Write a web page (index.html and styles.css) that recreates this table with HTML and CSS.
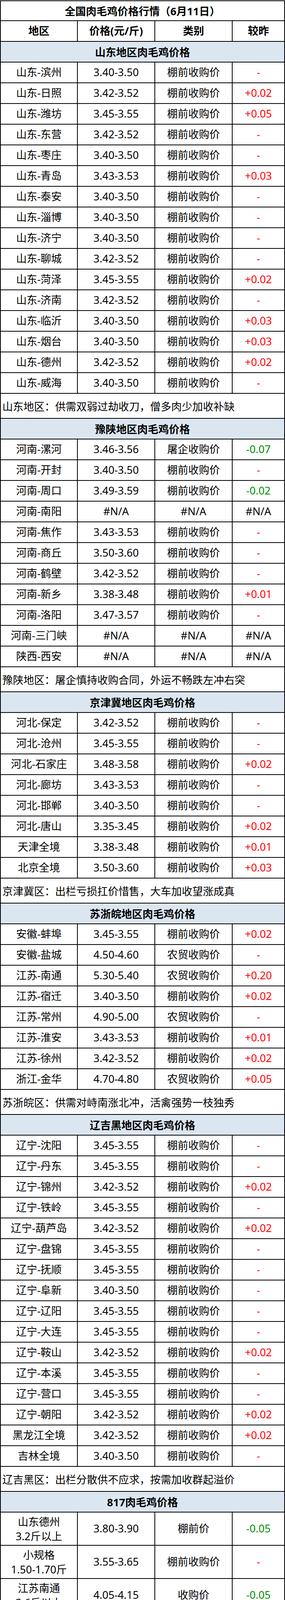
FILE: index.html
```html
<!DOCTYPE html>
<html lang="zh-CN">
<head>
<meta charset="utf-8">
<title>全国肉毛鸡价格行情</title>
<link rel="stylesheet" href="styles.css">
</head>
<body>
<div class="sheet">
  <div class="band title">全国肉毛鸡价格行情（6月11日）</div>
  <div class="r head"><div class="c">地区</div><div class="c">价格(元/斤)</div><div class="c">类别</div><div class="c">较昨</div></div>

  <div class="band sec">山东地区肉毛鸡价格</div>
  <div class="r"><div class="c">山东-滨州</div><div class="c">3.40-3.50</div><div class="c">棚前收购价</div><div class="c up">-</div></div>
  <div class="r"><div class="c">山东-日照</div><div class="c">3.42-3.52</div><div class="c">棚前收购价</div><div class="c up">+0.02</div></div>
  <div class="r"><div class="c">山东-潍坊</div><div class="c">3.45-3.55</div><div class="c">棚前收购价</div><div class="c up">+0.05</div></div>
  <div class="r"><div class="c">山东-东营</div><div class="c">3.42-3.52</div><div class="c">棚前收购价</div><div class="c up">-</div></div>
  <div class="r"><div class="c">山东-枣庄</div><div class="c">3.40-3.50</div><div class="c">棚前收购价</div><div class="c up">-</div></div>
  <div class="r"><div class="c">山东-青岛</div><div class="c">3.43-3.53</div><div class="c">棚前收购价</div><div class="c up">+0.03</div></div>
  <div class="r"><div class="c">山东-泰安</div><div class="c">3.40-3.50</div><div class="c">棚前收购价</div><div class="c up">-</div></div>
  <div class="r"><div class="c">山东-淄博</div><div class="c">3.40-3.50</div><div class="c">棚前收购价</div><div class="c up">-</div></div>
  <div class="r"><div class="c">山东-济宁</div><div class="c">3.40-3.50</div><div class="c">棚前收购价</div><div class="c up">-</div></div>
  <div class="r"><div class="c">山东-聊城</div><div class="c">3.42-3.52</div><div class="c">棚前收购价</div><div class="c up">-</div></div>
  <div class="r"><div class="c">山东-菏泽</div><div class="c">3.45-3.55</div><div class="c">棚前收购价</div><div class="c up">+0.02</div></div>
  <div class="r"><div class="c">山东-济南</div><div class="c">3.42-3.52</div><div class="c">棚前收购价</div><div class="c up">-</div></div>
  <div class="r"><div class="c">山东-临沂</div><div class="c">3.40-3.50</div><div class="c">棚前收购价</div><div class="c up">+0.03</div></div>
  <div class="r"><div class="c">山东-烟台</div><div class="c">3.40-3.50</div><div class="c">棚前收购价</div><div class="c up">+0.03</div></div>
  <div class="r"><div class="c">山东-德州</div><div class="c">3.42-3.52</div><div class="c">棚前收购价</div><div class="c up">+0.02</div></div>
  <div class="r"><div class="c">山东-威海</div><div class="c">3.40-3.50</div><div class="c">棚前收购价</div><div class="c up">-</div></div>
  <div class="band note">山东地区：供需双弱过劫收刀，僧多肉少加收补缺</div>

  <div class="band sec">豫陕地区肉毛鸡价格</div>
  <div class="r"><div class="c">河南-漯河</div><div class="c">3.46-3.56</div><div class="c">屠企收购价</div><div class="c dn">-0.07</div></div>
  <div class="r"><div class="c">河南-开封</div><div class="c">3.40-3.50</div><div class="c">棚前收购价</div><div class="c up">-</div></div>
  <div class="r"><div class="c">河南-周口</div><div class="c">3.49-3.59</div><div class="c">棚前收购价</div><div class="c dn">-0.02</div></div>
  <div class="r"><div class="c">河南-南阳</div><div class="c">#N/A</div><div class="c">#N/A</div><div class="c">#N/A</div></div>
  <div class="r"><div class="c">河南-焦作</div><div class="c">3.43-3.53</div><div class="c">棚前收购价</div><div class="c up">-</div></div>
  <div class="r"><div class="c">河南-商丘</div><div class="c">3.50-3.60</div><div class="c">棚前收购价</div><div class="c up">-</div></div>
  <div class="r"><div class="c">河南-鹤壁</div><div class="c">3.42-3.52</div><div class="c">棚前收购价</div><div class="c up">-</div></div>
  <div class="r"><div class="c">河南-新乡</div><div class="c">3.38-3.48</div><div class="c">棚前收购价</div><div class="c up">+0.01</div></div>
  <div class="r"><div class="c">河南-洛阳</div><div class="c">3.47-3.57</div><div class="c">棚前收购价</div><div class="c up">-</div></div>
  <div class="r"><div class="c">河南-三门峡</div><div class="c">#N/A</div><div class="c">#N/A</div><div class="c">#N/A</div></div>
  <div class="r"><div class="c">陕西-西安</div><div class="c">#N/A</div><div class="c">#N/A</div><div class="c">#N/A</div></div>
  <div class="band note">豫陕地区：屠企慎持收购合同，外运不畅跌左冲右突</div>

  <div class="band sec">京津冀地区肉毛鸡价格</div>
  <div class="r"><div class="c">河北-保定</div><div class="c">3.42-3.52</div><div class="c">棚前收购价</div><div class="c up">-</div></div>
  <div class="r"><div class="c">河北-沧州</div><div class="c">3.45-3.55</div><div class="c">棚前收购价</div><div class="c up">-</div></div>
  <div class="r"><div class="c">河北-石家庄</div><div class="c">3.48-3.58</div><div class="c">棚前收购价</div><div class="c up">+0.02</div></div>
  <div class="r"><div class="c">河北-廊坊</div><div class="c">3.43-3.53</div><div class="c">棚前收购价</div><div class="c up">-</div></div>
  <div class="r"><div class="c">河北-邯郸</div><div class="c">3.40-3.50</div><div class="c">棚前收购价</div><div class="c up">-</div></div>
  <div class="r"><div class="c">河北-唐山</div><div class="c">3.35-3.45</div><div class="c">棚前收购价</div><div class="c up">+0.02</div></div>
  <div class="r"><div class="c">天津全境</div><div class="c">3.38-3.48</div><div class="c">棚前收购价</div><div class="c up">+0.01</div></div>
  <div class="r"><div class="c">北京全境</div><div class="c">3.50-3.60</div><div class="c">棚前收购价</div><div class="c up">+0.03</div></div>
  <div class="band note">京津冀区：出栏亏损扛价惜售，大车加收望涨成真</div>

  <div class="band sec">苏浙皖地区肉毛鸡价格</div>
  <div class="r"><div class="c">安徽-蚌埠</div><div class="c">3.45-3.55</div><div class="c">棚前收购价</div><div class="c up">+0.02</div></div>
  <div class="r"><div class="c">安徽-盐城</div><div class="c">4.50-4.60</div><div class="c">农贸收购价</div><div class="c up">-</div></div>
  <div class="r"><div class="c">江苏-南通</div><div class="c">5.30-5.40</div><div class="c">农贸收购价</div><div class="c up">+0.20</div></div>
  <div class="r"><div class="c">江苏-宿迁</div><div class="c">3.40-3.50</div><div class="c">棚前收购价</div><div class="c up">+0.02</div></div>
  <div class="r"><div class="c">江苏-常州</div><div class="c">4.90-5.00</div><div class="c">农贸收购价</div><div class="c up">-</div></div>
  <div class="r"><div class="c">江苏-淮安</div><div class="c">3.43-3.53</div><div class="c">棚前收购价</div><div class="c up">+0.01</div></div>
  <div class="r"><div class="c">江苏-徐州</div><div class="c">3.42-3.52</div><div class="c">棚前收购价</div><div class="c up">+0.02</div></div>
  <div class="r"><div class="c">浙江-金华</div><div class="c">4.70-4.80</div><div class="c">农贸收购价</div><div class="c up">+0.05</div></div>
  <div class="band note">苏浙皖区：供需对峙南涨北冲，活禽强势一枝独秀</div>

  <div class="band sec">辽吉黑地区肉毛鸡价格</div>
  <div class="r"><div class="c">辽宁-沈阳</div><div class="c">3.45-3.55</div><div class="c">棚前收购价</div><div class="c up">-</div></div>
  <div class="r"><div class="c">辽宁-丹东</div><div class="c">3.45-3.55</div><div class="c">棚前收购价</div><div class="c up">-</div></div>
  <div class="r"><div class="c">辽宁-锦州</div><div class="c">3.42-3.52</div><div class="c">棚前收购价</div><div class="c up">+0.02</div></div>
  <div class="r"><div class="c">辽宁-铁岭</div><div class="c">3.45-3.55</div><div class="c">棚前收购价</div><div class="c up">-</div></div>
  <div class="r"><div class="c">辽宁-葫芦岛</div><div class="c">3.42-3.52</div><div class="c">棚前收购价</div><div class="c up">+0.02</div></div>
  <div class="r"><div class="c">辽宁-盘锦</div><div class="c">3.45-3.55</div><div class="c">棚前收购价</div><div class="c up">-</div></div>
  <div class="r"><div class="c">辽宁-抚顺</div><div class="c">3.45-3.55</div><div class="c">棚前收购价</div><div class="c up">-</div></div>
  <div class="r"><div class="c">辽宁-阜新</div><div class="c">3.40-3.50</div><div class="c">棚前收购价</div><div class="c up">-</div></div>
  <div class="r"><div class="c">辽宁-辽阳</div><div class="c">3.45-3.55</div><div class="c">棚前收购价</div><div class="c up">-</div></div>
  <div class="r"><div class="c">辽宁-大连</div><div class="c">3.45-3.55</div><div class="c">棚前收购价</div><div class="c up">-</div></div>
  <div class="r"><div class="c">辽宁-鞍山</div><div class="c">3.42-3.52</div><div class="c">棚前收购价</div><div class="c up">+0.02</div></div>
  <div class="r"><div class="c">辽宁-本溪</div><div class="c">3.45-3.55</div><div class="c">棚前收购价</div><div class="c up">-</div></div>
  <div class="r"><div class="c">辽宁-营口</div><div class="c">3.45-3.55</div><div class="c">棚前收购价</div><div class="c up">-</div></div>
  <div class="r"><div class="c">辽宁-朝阳</div><div class="c">3.42-3.52</div><div class="c">棚前收购价</div><div class="c up">+0.02</div></div>
  <div class="r"><div class="c">黑龙江全境</div><div class="c">3.42-3.52</div><div class="c">棚前收购价</div><div class="c up">+0.02</div></div>
  <div class="r"><div class="c">吉林全境</div><div class="c">3.40-3.50</div><div class="c">棚前收购价</div><div class="c up">-</div></div>
  <div class="band note">辽吉黑区：出栏分散供不应求，按需加收群起溢价</div>

  <div class="band sec">817肉毛鸡价格</div>
  <div class="r tall"><div class="c two">山东德州<br>3.2斤以上</div><div class="c">3.80-3.90</div><div class="c">棚前价</div><div class="c dn">-0.05</div></div>
  <div class="r tall"><div class="c two">小规格<br>1.50-1.70斤</div><div class="c">3.55-3.65</div><div class="c">棚前收购价</div><div class="c up">-</div></div>
  <div class="r tall"><div class="c two">江苏南通<br>3.6斤以上</div><div class="c">4.05-4.15</div><div class="c">收购价</div><div class="c dn">-0.05</div></div>
  <div class="r tall"><div class="c two">山东聊城<br>2.8-3.2斤</div><div class="c">3.75-3.85</div><div class="c">棚前收购价</div><div class="c dn">-0.05</div></div>
  <div class="r tall"><div class="c two">浙江金华<br>3.6斤以上</div><div class="c">4.70-4.80</div><div class="c">农贸收购价</div><div class="c up">+0.05</div></div>
  <div class="r tall"><div class="c two">河南濮阳<br>3.2-3.5斤</div><div class="c">3.85-3.95</div><div class="c">棚前收购价</div><div class="c up">-</div></div>
  <div class="r tall"><div class="c two">河南新乡<br>3.2-3.5斤</div><div class="c">3.70-3.80</div><div class="c">棚前收购价</div><div class="c up">-</div></div>
  <div class="r tall"><div class="c two">河南开封<br>3.2-3.5斤</div><div class="c">3.90-4.00</div><div class="c">棚前收购价</div><div class="c up">-</div></div>
  <div class="r tall"><div class="c two">津冀地区<br>2.8-3.2斤</div><div class="c">#N/A</div><div class="c">#N/A</div><div class="c">#N/A</div></div>
  <div class="band note">肉杂817鸡市场棚前行情：控量限杀，一路溃退</div>
</div>
</body>
</html>
```

FILE: styles.css
```css
* {
  box-sizing: border-box;
}

html, body {
  margin: 0;
  padding: 0;
  background: #ffffff;
}

body {
  font-family: "Noto Sans", "Noto Sans CJK SC", sans-serif;
  font-size: 27px;
  color: #000000;
}

.sheet {
  width: 729px;
  margin-top: 1px;
  border-left: 2px solid #000;
  border-top: 2px solid #000;
}

.r {
  display: grid;
  grid-template-columns: 197px 198px 198px 134px;
  grid-template-rows: 100%;
  height: 53px;
  overflow: hidden;
}

.r.tall {
  height: 85px;
}

.c {
  display: flex;
  align-items: center;
  justify-content: center;
  text-align: center;
  min-height: 0;
  min-width: 0;
  border-right: 2px solid #000;
  border-bottom: 2px solid #000;
  white-space: nowrap;
  line-height: 1.2;
}

.c.two {
  line-height: 37px;
}

.band {
  display: flex;
  align-items: center;
  border-right: 2px solid #000;
  border-bottom: 2px solid #000;
  height: 53px;
  overflow: hidden;
  white-space: nowrap;
}

.title {
  height: 51px;
  justify-content: center;
  font-weight: 700;
}

.head .c {
  font-weight: 700;
}

.sec {
  justify-content: center;
  font-weight: 700;
  background: #dce6f1;
}

.note {
  height: 64px;
  padding-left: 4px;
}

.up {
  color: #ff0000;
}

.dn {
  color: #009000;
}
```
